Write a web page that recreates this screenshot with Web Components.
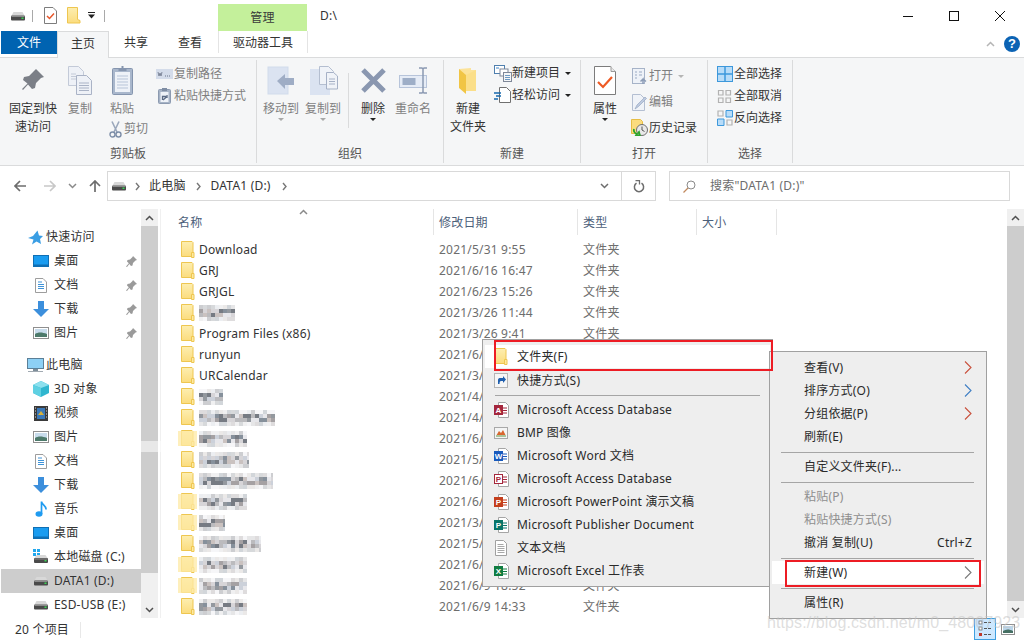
<!DOCTYPE html>
<html lang="zh">
<head>
<meta charset="utf-8">
<title>D:\</title>
<style>
  html, body { margin: 0; height: 100%; background: #fff; overflow: hidden; }
  body { font: 12px/18px "Noto Sans", "Noto Sans CJK SC", sans-serif; letter-spacing: .2px; color: #1a1a1a; }
</style>
</head>
<body>
<win-explorer></win-explorer>

<script>
// all icons live here, drawn on their real pixel size
const folderFill = '<linearGradient id="fg" x1="0" y1="0" x2="0" y2="1"><stop offset="0" stop-color="#fdeeb0"/><stop offset="1" stop-color="#fbdc7e"/></linearGradient>';
const ICONS = {
  drive: [16, 16, '<path d="M1.5 7.5 3.5 4h9l2 3.5z" fill="#d8d8d8"/><rect x="1" y="7.5" width="14" height="5" rx="1" fill="#4a4a4a"/><rect x="1.5" y="8" width="13" height="1" fill="#8a8a8a"/><rect x="11.5" y="9.5" width="2" height="1.5" fill="#39d353"/>'],
  driveWin: [16, 18, '<rect x="0" y="1" width="3" height="3" fill="#21a8ee"/><rect x="4" y="1" width="3" height="3" fill="#21a8ee"/><rect x="0" y="5" width="3" height="3" fill="#21a8ee"/><rect x="4" y="5" width="3" height="3" fill="#21a8ee"/><path d="M1.5 10 3.5 7h9l2 3z" fill="#d8d8d8"/><rect x="1" y="10" width="14" height="5" rx="1" fill="#4a4a4a"/><rect x="1.5" y="10.5" width="13" height="1" fill="#8a8a8a"/><rect x="11.5" y="12" width="2" height="1.5" fill="#39d353"/>'],
  qatProps: [13, 17, '<path d="M.5.5h8.5l3.500 3.500v12.500h-12z" fill="#fff" stroke="#7d7d7d"/><path d="M3 9l2.500 2.500 4.500-5" fill="none" stroke="#e8562a" stroke-width="1.500"/>'],
  qatFolder: [14, 17, folderFill + '<path d="M.5.5h10v12l2.500 1v2.500h-12.500z" fill="url(#fg)" stroke="#eec650"/>'],
  folder: [14, 17, folderFill + '<path d="M.5.5h10.500l1 1v14h-11.500z" fill="url(#fg)" stroke="#eec650"/><path d="M10.500 11.500h2.500v5h-2.500z" fill="#fde9a0" stroke="#eec650"/>'],
  folderSide: [20, 28, '<path d="M1 3l12-1v2h5v21H6z" fill="#fce39a"/><path d="M1 3 8 9v19L1 22z" fill="#f1c545"/><path d="M8 9l10-5v21H8z" fill="#fbdf8a"/>'],
  pin: [24, 24, '<path d="M15 1l8 8-3 1-5 5-1 5-3 1-4-4.500L2 22l-1-1 5.500-5.500L2 12l1-3 5-1 5-5z" fill="#7b7f87"/>'],
  copy: [24, 29, '<path d="M.5.5h10l5 5v14H.5z" fill="#eef1f7" stroke="#c3cad8"/><path d="M8.500 9.500h10l5 5v14h-15z" fill="#eef1f7" stroke="#aab3c6"/><path d="M11 17h10M11 19.500h10M11 22h10M11 24.500h10" stroke="#aab3c6"/><path d="M3 8h5M3 10.500h5M3 13h5" stroke="#c3cad8"/>'],
  paste: [21, 30, '<rect x=".5" y="3.500" width="20" height="26" rx="1" fill="#a9b7cc" stroke="#8595ae"/><rect x="3" y="7" width="15" height="20" fill="#eef2f8"/><path d="M5 11h11M5 14h11M5 17h11M5 20h11M5 23h11" stroke="#b7c4d8"/><path d="M6.500 6V3h3V1h2v2h3v3z" fill="#8595ae"/>'],
  pathCopy: [17, 10, '<rect width="17" height="10" fill="#d4dcea"/><path d="M2 3l1 4 1-3 1 3 1-4" fill="none" stroke="#6b7488" stroke-width=".8"/><path d="M9 7h1m1 0h1m1 0h1" stroke="#6b7488"/>'],
  pasteLink: [13, 16, '<rect x=".5" y="1.500" width="12" height="14" rx="1" fill="#a6b3c6" stroke="#8c9ab0"/><rect x="2.500" y="4" width="8" height="10" fill="#eef2f8"/><rect x="4" y="0" width="5" height="3" fill="#7f8da3"/><path d="M4.500 12V8.500h3.500M5 8.500l.5-.5m-.5 4 4-3.500M9 7v3" stroke="#5b6b85" fill="none" stroke-width="1.300"/>'],
  scissors: [13, 17, '<path d="M3 .5 8 11M10 .5 5 11" stroke="#9aa7bb" stroke-width="1.600"/><circle cx="3.500" cy="13.500" r="2.500" fill="none" stroke="#7d8ea8" stroke-width="1.400"/><circle cx="9.500" cy="13.500" r="2.500" fill="none" stroke="#7d8ea8" stroke-width="1.400"/>'],
  moveTo: [28, 29, '<rect x="1" y="1" width="20" height="27" fill="#dbe3f1" stroke="#d1dbeb"/><path d="M10 15l8-7v4h9v7h-9v4z" fill="#9fadc5"/>'],
  copyTo: [29, 29, '<rect x="1" y="3" width="20" height="26" fill="#dbe3f1"/><path d="M10.500.5h9l5 5v13h-14z" fill="#f0f3f8" stroke="#b4bed0"/><path d="M17.500 6.500h7l4 3.500v13h-11z" fill="#f0f3f8" stroke="#a6b1c6"/><path d="M20 13h6M20 15.500h6M20 18h6" stroke="#a6b1c6"/>'],
  del: [27, 27, '<path d="M3 3l21 21M24 3 3 24" stroke="#8a97b0" stroke-width="5"/>'],
  rename: [29, 27, '<rect x=".5" y="8.500" width="27" height="12" fill="#e6ecf6" stroke="#b7c4da"/><rect x="3.500" y="11" width="13" height="7" fill="#9eaec7"/><path d="M20 1h3l1 1 1-1h3M20 26h3l1-1 1 1h3M24 2v23" fill="none" stroke="#8b99b2" stroke-width="1.500"/>'],
  newItem: [18, 17, '<rect x=".5" y=".5" width="10" height="8" fill="#fff" stroke="#4f7fae"/><rect x="2" y="2" width="3" height="2" fill="#9dc1e4"/><rect x="6" y="4" width="8" height="7" fill="#fff" stroke="#7f8899"/><rect x="9.500" y="7.500" width="8" height="9" fill="#f5f6f7" stroke="#7f8899"/><path d="M11 10.500h5M11 12.500h5M11 14.500h5" stroke="#6f9bc4"/>'],
  easyAccess: [17, 16, '<path d="M5.500.5h7l4 4v11h-11z" fill="#fff" stroke="#707070"/><path d="M0 6h7M2 9h5M0 12h4" stroke="#1668ad" stroke-width="1.400"/>'],
  props: [22, 29, '<path d="M.5.500h16l5 5v23H.5z" fill="#fff" stroke="#7c7c7c"/><path d="M17 .5v5h4.500" fill="#e8e8e8" stroke="#9a9a9a"/><path d="M4 16l5 5 9-10" fill="none" stroke="#ee5a24" stroke-width="2.200"/>'],
  open: [15, 17, '<rect x=".5" y=".5" width="12" height="15" fill="#eef2f8" stroke="#a6b3c8"/><path d="M3 4h2M7 4h3M3 7h2M7 7h3M3 10h2" stroke="#9aa9c2"/><path d="M11 16v-5l-2.500 2.500M11 11l3 2.500" fill="none" stroke="#8c9cb6" stroke-width="1.500"/>'],
  edit: [15, 17, '<path d="M.5.5h8l4 4v12H.5z" fill="#f0f3f8" stroke="#b4bfd2"/><path d="M3 15l2-4 8-8 1.500 1.500-8 8z" fill="#bdcae0" stroke="#98a8c2" stroke-width=".7"/>'],
  history: [17, 17, '<path d="M.5.5h9l2 2v12H.5z" fill="#fbdc7e" stroke="#e6bd45"/><circle cx="11" cy="11" r="5.500" fill="#e8e8e8" stroke="#6f6f6f"/><path d="M11 7.500V11l2.500 1.500" fill="none" stroke="#555"/><path d="M3 10a4 4 0 0 0 3 5l-1 1.500 4 .5-1-4-1 1" fill="none" stroke="#2da52d" stroke-width="1.800"/>'],
  selAll: [16, 16, '<rect x=".5" y=".5" width="15" height="15" fill="#b8dcf8" stroke="#3d98db"/><path d="M8 0v16M0 8h16" stroke="#3d98db" stroke-width="1.500"/>'],
  selNone: [15, 15, '<path d="M1.500 1.500h4.500v4.500h-4.500zM9 1.500h4.500v4.500H9zM1.500 9h4.500v4.500h-4.500zM9 9h4.500v4.500H9z" fill="none" stroke="#b2b2b2" stroke-width="1.200"/>'],
  selInv: [16, 16, '<path d="M1 1h5v5H1zM10 10h5v5h-5z" fill="none" stroke="#b2b2b2" stroke-width="1.200"/><path d="M9 .5h6.500v6.500H9zM.5 9H7v6.500H.5z" fill="#b8dcf8" stroke="#3d98db"/>'],
  back: [12, 12, '<path d="M6 1 1 6l5 5M1 6h11" fill="none" stroke="currentColor" stroke-width="1.700"/>'],
  forward: [12, 12, '<path d="M6 1l5 5-5 5M11 6H0" fill="none" stroke="currentColor" stroke-width="1.700"/>'],
  up: [12, 12, '<path d="M1 6l5-5 5 5M6 1v11" fill="none" stroke="currentColor" stroke-width="1.700"/>'],
  chevDown: [9, 6, '<path d="M1 1l3.500 3.500L8 1" fill="none" stroke="currentColor" stroke-width="1.500"/>'],
  chevUp: [9, 6, '<path d="M1 5l3.500-3.500L8 5" fill="none" stroke="currentColor" stroke-width="1.500"/>'],
  chevRight: [5, 9, '<path d="M1 1l3 3.500L1 8" fill="none" stroke="currentColor" stroke-width="1.400"/>'],
  refresh: [12, 13, '<path d="M3.500 3.200a4.600 4.600 0 1 0 5 0" fill="none" stroke="#6d6d6d" stroke-width="1.500"/><path d="M2.500 .5h4v4" fill="none" stroke="#6d6d6d" stroke-width="1.300"/>'],
  search: [13, 13, '<circle cx="8" cy="5" r="4" fill="none" stroke="#8a8a8a"/><path d="M5 8 .5 12.500" stroke="#c28a5e" stroke-width="1.200"/>'],
  star: [15, 15, '<path d="M9.500.5 11 5.500l4 .5-3 3 1 5-4.500-2.500L4 14.500 5.500 9.500 0 8l5-2z" fill="#3a9ee4"/>'],
  desktop: [16, 12, '<rect x=".5" y=".5" width="15" height="11" fill="#1a9cf0" stroke="#0f6fb4"/><rect x="1" y="9.500" width="14" height="1.500" fill="#0f6fb4"/>'],
  doc: [12, 15, '<path d="M.5.500h7.500l3.500 3.500v10.500H.5z" fill="#fff" stroke="#9d9d9d"/><path d="M3 4h4M3 6.500h6M3 8.500h6M3 10.500h6" stroke="#3f93d8"/>'],
  down: [16, 16, '<path d="M5 0h6v8h5l-8 8-8-8h5z" fill="#3c8fdc"/>'],
  picture: [16, 12, '<rect x=".5" y=".5" width="15" height="11" fill="#fff" stroke="#8f8f8f"/><rect x="2" y="2" width="12" height="8" fill="#c8dcec"/><path d="M2 7c3-2 7-2 12 0v3H2z" fill="#4d7a6b"/>'],
  pc: [17, 14, '<rect x=".5" y=".5" width="16" height="10" fill="#8dd0f5" stroke="#5b7f97"/><rect x="6" y="11" width="5" height="2" fill="#7e8e9a"/><rect x="1" y="13" width="15" height="1" fill="#a1aab2"/>'],
  cube: [16, 16, '<path d="M8 0l8 4v8l-8 4-8-4V4z" fill="#2fb6cf"/><path d="M8 7 0 4l8-4 8 4z" fill="#8de0ee"/><path d="M8 7v9L0 12V4z" fill="#5fd0e2"/>'],
  video: [14, 15, '<rect width="14" height="15" fill="#3a3a3a"/><rect x="3" y="2" width="8" height="11" fill="#3a78b8"/><path d="M4 9l3-4 3 4z" fill="#d8b13a"/><path d="M1 2h1M1 5h1M1 8h1M1 11h1M12 2h1M12 5h1M12 8h1M12 11h1" stroke="#ddd"/>'],
  music: [12, 16, '<ellipse cx="4" cy="13" rx="3.500" ry="2.800" fill="#1f9bf0"/><path d="M6.500 13V.5c0 3 5 4 4.500 8" fill="none" stroke="#1f9bf0" stroke-width="1.700"/>'],
  pinSmall: [11, 11, '<path d="M7 0l4 4-1.500.5-2.500 2.500-.5 2.500-1.500.5-1.700-2L1 11l-1-.5 2.800-3.300L1 5.500l.5-1.500 2.500-.5 2.500-2.500z" fill="#9a9a9a"/>'],
  shortcut: [14, 15, '<rect x=".5" y=".5" width="13" height="14" fill="#f6f6f6" stroke="#b5b5b5"/><path d="M4 11V7c0-1.500 1-2 2.500-2H9V3l3 3.500L9 10V8H7c-1 0-1.500 1-1.500 3z" fill="#1f5fae"/>'],
  bmp: [14, 12, '<rect x=".5" y=".5" width="13" height="11" fill="#f4f4f4" stroke="#a8a8a8"/><path d="M2 9l3-5 2 2 2-3 3 6z" fill="#d8662e"/><rect x="2" y="8" width="10" height="2" fill="#a9c49a"/>'],
  text: [12, 16, '<path d="M.5.500h8l3 3v12h-11z" fill="#fff" stroke="#a0a0a0"/><path d="M2.500 4.500h6M2.500 6.500h7M2.500 8.500h7M2.500 10.500h7M2.500 12.500h7" stroke="#a8a8a8"/>'],
  bigList: [22, 22, '<rect x=".5" y=".5" width="21" height="21" fill="#cce8ff" stroke="#3e9fe0"/><rect x="5" y="3" width="3" height="3" fill="#fff" stroke="#6a6a6a" stroke-width=".8"/><rect x="5" y="9" width="3" height="3" fill="#fff" stroke="#6a6a6a" stroke-width=".8"/><rect x="5" y="15" width="3" height="3" fill="#c0392b"/><path d="M10 4.500h3m1 0h3M10 10.500h3m1 0h3M10 16.500h3m1 0h3" stroke="#555"/>'],
  bigThumb: [14, 11, '<rect x=".5" y=".5" width="13" height="10" fill="#fff" stroke="#8f8f8f"/><rect x="2" y="2" width="10" height="7" fill="#bcd6ea"/><path d="M2 7c3-2 6-2 10 0v2H2z" fill="#456f63"/>']
};

// office file icon: letter tile on a small page
function officeIcon(letter, color, hollow) {
  const tile = hollow
    ? `<rect x=".5" y="3.500" width="8" height="9" fill="#fff" stroke="${color}"/>`
    : `<rect x="0" y="3" width="9" height="10" fill="${color}"/>`;
  return [15, 16, `<path d="M4.500 .5h7l3 3v12h-10z" fill="#fff" stroke="#a5a5a5"/><path d="M9 6h4M9 8.500h4M9 11h4" stroke="${color}"/>${tile}<text x="4.500" y="11" font-size="8" font-weight="700" text-anchor="middle" fill="${hollow ? color : '#fff'}" font-family="Liberation Sans, sans-serif" letter-spacing="0">${letter}</text>`];
}
ICONS.access = officeIcon('A', '#a4263c');
ICONS.word = officeIcon('W', '#185abd');
ICONS.accessP = officeIcon('P', '#a4263c', true);
ICONS.ppt = officeIcon('P', '#c43e1c');
ICONS.pub = officeIcon('P', '#077568');
ICONS.excel = officeIcon('X', '#107c41');

let iconId = 0;
function svg(name) {
  const [w, h, body] = ICONS[name];
  // every gradient needs an id of its own inside its shadow root
  const id = 'g' + (++iconId);
  const inner = body.replace(/id="fg"/g, `id="${id}"`).replace(/url\(#fg\)/g, `url(#${id})`);
  return `<svg width="${w}" height="${h}" viewBox="0 0 ${w} ${h}" style="display:block">${inner}</svg>`;
}

// pixelated patch standing for the censored names in the reference
function mosaic(width, seed) {
  const cols = ['#8d9299', '#b7b7bb', '#d5d3d6', '#6f747c', '#c9cfd8', '#a09c9e', '#e6e6ea', '#7f8a96', '#c7bfbd'];
  let s = seed * 7919 + 13, out = '';
  for (let y = 0; y < 16; y += 4) {
    for (let x = 0; x < width; x += 4) {
      s = (s * 1103515245 + 12345) & 0x7fffffff;
      const c = cols[(s >> 8) % cols.length];
      const a = (y === 0 || y === 12) ? 0.35 : 0.95;
      out += `<rect x="${x}" y="${y}" width="4" height="4" fill="${c}" opacity="${a}"/>`;
    }
  }
  return `<svg width="${width}" height="16" shape-rendering="crispEdges" style="display:block">${out}</svg>`;
}

class WinIcon extends HTMLElement {
  connectedCallback() {
    const shadow = this.attachShadow({ mode: 'open' });
    shadow.innerHTML = `<style>:host{display:block;line-height:0}</style>${svg(this.getAttribute('name'))}`;
  }
}
customElements.define('win-icon', WinIcon);

class WinTitlebar extends HTMLElement {
  connectedCallback() {
    const shadow = this.attachShadow({ mode: 'open' });
    shadow.innerHTML = `
      <style>
        :host { display: flex; height: 31px; align-items: center; position: relative; }
        .qat { display: flex; align-items: center; padding-left: 10px; width: 218px; box-sizing: border-box; height: 31px; }
        .bar { width: 1px; height: 12px; background: #a9a9a9; }
        .manage { width: 89px; height: 27px; margin-top: 4px; background: #c4f09b; color: #3a3a3a; text-align: center; line-height: 27px; }
        .path { margin-left: 13px; color: #333; }
        .win { margin-left: auto; margin-right: 1px; display: flex; height: 31px; }
        .win div { width: 46px; display: flex; align-items: center; justify-content: center; }
      </style>
      <div class="qat">
        ${svg('drive')}
        <div class="bar" style="margin-left:6px"></div>
        <div style="margin-left:11px">${svg('qatProps')}</div>
        <div style="margin-left:10px">${svg('qatFolder')}</div>
        <svg width="8" height="7" style="margin-left:7px;display:block"><path d="M0 0h7v1H0zM0 2.500h7L3.500 6.500z" fill="#222"/></svg>
        <div class="bar" style="margin-left:8px"></div>
      </div>
      <div class="manage">管理</div>
      <div class="path">D:\\</div>
      <div class="win">
        <div><svg width="10" height="10"><path d="M0 5.500h10" stroke="#111"/></svg></div>
        <div><svg width="10" height="10"><rect x=".5" y=".5" width="9" height="9" fill="none" stroke="#111"/></svg></div>
        <div><svg width="10" height="10"><path d="M0 0l10 10M10 0 0 10" stroke="#111"/></svg></div>
      </div>`;
  }
}
customElements.define('win-titlebar', WinTitlebar);

class WinTabs extends HTMLElement {
  connectedCallback() {
    const shadow = this.attachShadow({ mode: 'open' });
    shadow.innerHTML = `
      <style>
        :host { display: flex; height: 26px; box-sizing: border-box; color: #333; position: relative; z-index: 1; letter-spacing: 0; }
        .t { text-align: center; line-height: 24px; }
        .file { width: 56px; margin-left: 1px; height: 23px; background: #0063b1; color: #fff; line-height: 23px; }
        .home { width: 52px; height: 27px; box-sizing: border-box; background: #f5f6f7; border: 1px solid #dadbdc; border-bottom: 0; }
        .tool { width: 90px; margin-left: 1px; height: 22px; box-sizing: border-box; border: 1px solid #e4e4e4; border-top: 0; border-bottom: 0; line-height: 24px; }
        .end { margin-left: auto; display: flex; align-items: center; height: 26px; padding-right: 4px; }
        .help { width: 16px; height: 16px; margin-left: 9px; border-radius: 50%; background: #0c63b4; color: #fff; font: 700 13px/16px "Liberation Sans", sans-serif; text-align: center; }
      </style>
      <div class="t file">文件</div>
      <div class="t home">主页</div>
      <div class="t" style="width:54px">共享</div>
      <div class="t" style="width:54px">查看</div>
      <div class="t tool">驱动器工具</div>
      <div class="end">
        <span style="color:#b5b5b5">${svg('chevUp')}</span>
        <div class="help">?</div>
      </div>`;
  }
}
customElements.define('win-tabs', WinTabs);

class RibbonGroup extends HTMLElement {
  connectedCallback() {
    const shadow = this.attachShadow({ mode: 'open' });
    shadow.innerHTML = `
      <style>
        :host { display: grid; grid-template-rows: 85px 18px; box-sizing: border-box; height: 103px; border-right: 1px solid #dadbdc; }
        .body { display: flex; }
        .label { text-align: center; color: #555; }
      </style>
      <div class="body"><slot></slot></div>
      <div class="label">${this.getAttribute('label')}</div>`;
  }
}
customElements.define('ribbon-group', RibbonGroup);

class BigButton extends HTMLElement {
  connectedCallback() {
    const shadow = this.attachShadow({ mode: 'open' });
    const color = this.hasAttribute('dim') ? '#7f7f7f' : '#333';
    const caret = this.getAttribute('caret');
    shadow.innerHTML = `
      <style>
        :host { display: flex; flex-direction: column; align-items: center; width: ${this.getAttribute('w') || 36}px; }
        .ic { height: 40px; display: flex; align-items: center; justify-content: center; }
        .txt { color: ${color}; text-align: center; white-space: pre-line; }
        .caret { width: 0; height: 0; border: 3px solid transparent; border-top: 3px solid ${caret === 'dim' ? '#a8a8a8' : '#222'}; border-bottom: 0; }
      </style>
      <div class="ic"><slot></slot></div>
      <div class="txt">${this.getAttribute('label')}</div>
      ${caret ? '<div class="caret"></div>' : ''}`;
  }
}
customElements.define('big-button', BigButton);

class SmallButton extends HTMLElement {
  connectedCallback() {
    const shadow = this.attachShadow({ mode: 'open' });
    const color = this.hasAttribute('dim') ? '#7f7f7f' : '#333';
    const caret = this.getAttribute('caret');
    shadow.innerHTML = `
      <style>
        :host { display: flex; align-items: center; height: ${this.getAttribute('h') || 22}px; white-space: nowrap; }
        .ic { width: ${this.getAttribute('iw') || 19}px; display: flex; justify-content: center; flex: none; }
        .txt { color: ${color}; }
        .caret { margin-left: 5px; width: 0; height: 0; border: 3px solid transparent; border-top: 3px solid ${caret === 'dim' ? '#b5b5b5' : '#222'}; border-bottom: 0; }
      </style>
      <div class="ic"><slot></slot></div>
      <div class="txt">${this.getAttribute('label')}</div>
      ${caret ? '<div class="caret"></div>' : ''}`;
  }
}
customElements.define('small-button', SmallButton);

class WinRibbon extends HTMLElement {
  connectedCallback() {
    const shadow = this.attachShadow({ mode: 'open' });
    shadow.innerHTML = `
      <style>
        :host { display: flex; height: 109px; box-sizing: border-box; background: #f5f6f7; border-top: 1px solid #dadbdc; border-bottom: 1px solid #dadbdc; padding-top: 2px; letter-spacing: 0; overflow: hidden; }
        .col { display: flex; flex-direction: column; padding-top: 3px; }
        .paste { width: 36px; margin-left: 6px; }
        .sep { width: 1px; height: 55px; background: #dadbdc; margin-top: 13px; }
      </style>
      <ribbon-group label="剪贴板" style="width:257px">
        <big-button label="固定到快速访问" w="50" style="margin-left:8px"><win-icon name="pin"></win-icon></big-button>
        <big-button label="复制" dim style="margin-left:4px"><win-icon name="copy"></win-icon></big-button>
        <div class="paste">
          <big-button label="粘贴" dim><win-icon name="paste"></win-icon></big-button>
          <small-button label="剪切" dim iw="17" style="margin-left:3px"><win-icon name="scissors"></win-icon></small-button>
        </div>
        <div class="col" style="margin-left:15px">
          <small-button label="复制路径" dim><win-icon name="pathCopy"></win-icon></small-button>
          <small-button label="粘贴快捷方式" dim><win-icon name="pasteLink"></win-icon></small-button>
        </div>
      </ribbon-group>
      <ribbon-group label="组织" style="width:187px">
        <big-button label="移动到" dim caret="dim" style="margin-left:6px"><win-icon name="moveTo"></win-icon></big-button>
        <big-button label="复制到" dim caret="dim" style="margin-left:6px"><win-icon name="copyTo"></win-icon></big-button>
        <div class="sep" style="margin-left:7px"></div>
        <big-button label="删除" caret="on" w="40" style="margin-left:4px"><win-icon name="del"></win-icon></big-button>
        <big-button label="重命名" dim w="40"><win-icon name="rename"></win-icon></big-button>
      </ribbon-group>
      <ribbon-group label="新建" style="width:137px">
        <big-button label="新建&#10;文件夹" style="margin-left:6px"><win-icon name="folderSide"></win-icon></big-button>
        <div class="col" style="margin-left:7px;padding-top:2px">
          <small-button label="新建项目" caret="on"><win-icon name="newItem"></win-icon></small-button>
          <small-button label="轻松访问" caret="on"><win-icon name="easyAccess"></win-icon></small-button>
        </div>
      </ribbon-group>
      <ribbon-group label="打开" style="width:127px">
        <big-button label="属性" caret="on" style="margin-left:6px"><win-icon name="props"></win-icon></big-button>
        <div class="col" style="margin-left:7px">
          <small-button label="打开" dim caret="dim" h="26"><win-icon name="open"></win-icon></small-button>
          <small-button label="编辑" dim h="26"><win-icon name="edit"></win-icon></small-button>
          <small-button label="历史记录" h="25"><win-icon name="history"></win-icon></small-button>
        </div>
      </ribbon-group>
      <ribbon-group label="选择" style="width:85px">
        <div class="col" style="margin-left:7px">
          <small-button label="全部选择"><win-icon name="selAll"></win-icon></small-button>
          <small-button label="全部取消"><win-icon name="selNone"></win-icon></small-button>
          <small-button label="反向选择"><win-icon name="selInv"></win-icon></small-button>
        </div>
      </ribbon-group>`;
  }
}
customElements.define('win-ribbon', WinRibbon);

class WinAddressbar extends HTMLElement {
  connectedCallback() {
    const shadow = this.attachShadow({ mode: 'open' });
    shadow.innerHTML = `
      <style>
        :host { display: flex; align-items: center; height: 30px; margin: 5px 14px 8px 14px; }
        .nav { display: flex; align-items: center; width: 93px; flex: none; color: #6d6d6d; }
        .box { flex: none; width: 549px; height: 30px; box-sizing: border-box; border: 1px solid #d9d9d9; display: flex; align-items: center; color: #333; }
        .crumb { display: flex; align-items: center; color: #777; }
        .end { margin-left: auto; display: flex; align-items: center; height: 28px; color: #6d6d6d; }
        .end > div { height: 28px; display: flex; align-items: center; justify-content: center; }
        .search { margin-left: 13px; flex: 1; height: 30px; box-sizing: border-box; border: 1px solid #d9d9d9; display: flex; align-items: center; color: #6d6d6d; padding-left: 13px; }
      </style>
      <div class="nav">
        ${svg('back')}
        <span style="margin-left:18px;color:#c8c8c8">${svg('forward')}</span>
        <span style="margin-left:12px;color:#8a8a8a">${svg('chevDown')}</span>
        <span style="margin-left:12px">${svg('up')}</span>
      </div>
      <div class="box">
        <span style="margin-left:3px">${svg('drive')}</span>
        <span class="crumb" style="margin-left:8px">${svg('chevRight')}</span>
        <span style="margin-left:9px">此电脑</span>
        <span class="crumb" style="margin-left:10px">${svg('chevRight')}</span>
        <span style="margin-left:10px">DATA1 (D:)</span>
        <span class="crumb" style="margin-left:11px">${svg('chevRight')}</span>
        <div class="end">
          <div style="width:33px;border-right:1px solid #d9d9d9">${svg('chevDown')}</div>
          <div style="width:33px">${svg('refresh')}</div>
        </div>
      </div>
      <div class="search">${svg('search')}<span style="margin-left:14px">搜索"DATA1 (D:)"</span></div>`;
  }
}
customElements.define('win-addressbar', WinAddressbar);

class NavItem extends HTMLElement {
  connectedCallback() {
    const shadow = this.attachShadow({ mode: 'open' });
    const head = this.hasAttribute('head');
    const pinned = this.hasAttribute('pinned');
    shadow.innerHTML = `
      <style>
        :host { display: flex; align-items: center; height: 24px; position: relative; color: #333; }
        :host([selected]) { background: #cdcdcd; }
        .ic { flex: none; width: ${head ? 18 : 26}px; margin-left: ${head ? 25 : 27}px; display: flex; justify-content: center; }
        .pin { margin-left: auto; margin-right: 4px; }
      </style>
      <div class="ic">${svg(this.getAttribute('icon'))}</div>
      <div style="margin-left:${head ? 2 : 0}px">${this.getAttribute('label')}</div>
      ${pinned ? `<div class="pin">${svg('pinSmall')}</div>` : ''}`;
  }
}
customElements.define('nav-item', NavItem);

class WinScrollbar extends HTMLElement {
  connectedCallback() {
    const shadow = this.attachShadow({ mode: 'open' });
    shadow.innerHTML = `
      <style>
        :host { display: flex; flex-direction: column; width: 17px; flex: none; background: #f0f0f0; color: #505050; }
        .btn { height: 17px; display: flex; align-items: center; justify-content: center; flex: none; }
        .thumb { flex: none; height: ${this.getAttribute('thumb')}px; background: #cdcdcd; }
        .fill { flex: 1; }
      </style>
      <div class="btn">${svg('chevUp')}</div>
      <div class="thumb"></div>
      <div class="fill"></div>
      <div class="btn">${svg('chevDown')}</div>`;
  }
}
customElements.define('win-scrollbar', WinScrollbar);

class WinSidebar extends HTMLElement {
  connectedCallback() {
    const shadow = this.attachShadow({ mode: 'open' });
    shadow.innerHTML = `
      <style>
        :host { display: flex; width: 158px; flex: none; height: 409px; }
        .list { width: 140px; margin-left: 1px; flex: none; padding-top: 16px; box-sizing: border-box; overflow: hidden; }
        .gap { height: 8px; }
      </style>
      <div class="list">
        <nav-item head icon="star" label="快速访问"></nav-item>
        <nav-item icon="desktop" label="桌面" pinned></nav-item>
        <nav-item icon="doc" label="文档" pinned></nav-item>
        <nav-item icon="down" label="下载" pinned></nav-item>
        <nav-item icon="picture" label="图片" pinned></nav-item>
        <div class="gap"></div>
        <nav-item head icon="pc" label="此电脑"></nav-item>
        <nav-item icon="cube" label="3D 对象"></nav-item>
        <nav-item icon="video" label="视频"></nav-item>
        <nav-item icon="picture" label="图片"></nav-item>
        <nav-item icon="doc" label="文档"></nav-item>
        <nav-item icon="down" label="下载"></nav-item>
        <nav-item icon="music" label="音乐"></nav-item>
        <nav-item icon="desktop" label="桌面"></nav-item>
        <nav-item icon="driveWin" label="本地磁盘 (C:)"></nav-item>
        <nav-item icon="drive" label="DATA1 (D:)" selected></nav-item>
        <nav-item icon="drive" label="ESD-USB (E:)"></nav-item>
      </div>
      <win-scrollbar thumb="347"></win-scrollbar>`;
  }
}
customElements.define('win-sidebar', WinSidebar);

class FileRow extends HTMLElement {
  connectedCallback() {
    const shadow = this.attachShadow({ mode: 'open' });
    const name = this.getAttribute('name');
    const blur = this.getAttribute('blur');
    const seed = +this.getAttribute('seed') || 1;
    const hazy = this.hasAttribute('hazy');
    const covered = this.hasAttribute('covered');
    shadow.innerHTML = `
      <style>
        :host { display: grid; grid-template-columns: 261px 144px 1fr; height: 21px; align-items: center; color: #6d6d6d; }
        .n { display: flex; align-items: center; padding-left: 3px; color: #333; }
        .f { position: relative; }
        .haze { position: absolute; left: -3px; top: 1px; width: 19px; height: 15px; background: #fde9a6; opacity: .75; }
      </style>
      <div class="n">
        <div class="f">${svg('folder')}${hazy ? '<div class="haze"></div>' : ''}</div>
        <div style="margin-left:4px">${name || mosaic(+blur, seed)}</div>
      </div>
      <div>${this.getAttribute('date')}</div>
      ${covered ? '' : '<div>文件夹</div>'}`;
  }
}
customElements.define('file-row', FileRow);

class WinFilelist extends HTMLElement {
  connectedCallback() {
    const shadow = this.attachShadow({ mode: 'open' });
    // the rows under the context menus only show the start of their date
    const rows = [
      ['Download', 0, '2021/5/31 9:55'],
      ['GRJ', 0, '2021/6/16 16:47'],
      ['GRJGL', 0, '2021/6/23 15:26'],
      ['', 36, '2021/3/26 11:44'],
      ['Program Files (x86)', 0, '2021/3/26 9:41'],
      ['runyun', 0, '2021/6/', 0, 1],
      ['URCalendar', 0, '2021/3/', 0, 1],
      ['', 24, '2021/4/', 0, 1],
      ['', 76, '2021/4/', 0, 1],
      ['', 48, '2021/6/', 1, 1],
      ['', 50, '2021/5/', 0, 1],
      ['', 74, '2021/6/', 0, 1],
      ['', 48, '2021/6/', 1, 1],
      ['', 26, '2021/3/', 1, 1],
      ['', 62, '2021/5/', 0, 1],
      ['', 48, '2021/6/', 1, 1],
      ['', 48, '2021/6/9 18:52', 1],
      ['', 48, '2021/6/9 14:33']
    ];
    const rowHtml = rows.map((r, i) =>
      `<file-row ${r[0] ? `name="${r[0]}"` : `blur="${r[1]}" seed="${i + 1}"`} date="${r[2]}" ${r[3] ? 'hazy' : ''} ${r[4] ? 'covered' : ''}></file-row>`
    ).join('');
    shadow.innerHTML = `
      <style>
        :host { display: flex; flex: 1; height: 409px; min-width: 0; position: relative; }
        .main { flex: 1; min-width: 0; border-left: 1px solid #f0f0f0; box-sizing: border-box; margin-left: 2px; padding-left: 17px; }
        .head { display: flex; height: 26px; color: #4c607a; position: relative; }
        .head div { box-sizing: border-box; padding-left: 5px; height: 26px; line-height: 27px; border-right: 1px solid #e5e5e5; }
        .sort { position: absolute; left: 121px; top: 0; color: #8a8a8a; line-height: 0; }
        .rows { padding-top: 4px; }
      </style>
      <div class="main">
        <div class="head">
          <div style="width:256px;padding-left:0">名称</div>
          <div style="width:144px">修改日期</div>
          <div style="width:119px">类型</div>
          <div style="width:80px">大小</div>
          <span class="sort">${svg('chevUp')}</span>
        </div>
        <div class="rows">${rowHtml}</div>
      </div>
      <win-scrollbar thumb="375"></win-scrollbar>`;
  }
}
customElements.define('win-filelist', WinFilelist);

class MenuItem extends HTMLElement {
  connectedCallback() {
    const shadow = this.attachShadow({ mode: 'open' });
    const icon = this.getAttribute('icon');
    const h = this.getAttribute('h') || 23;
    shadow.innerHTML = `
      <style>
        :host { display: flex; align-items: center; height: ${h}px; color: #2a2a2a; position: relative; }
        :host([off]) { color: #8f8f8f; }
        :host([hot]) { background: #fff; }
        .ic { width: ${this.getAttribute('iw') || 32}px; flex: none; display: flex; justify-content: center; }
        .r { margin-left: auto; margin-right: ${this.getAttribute('mr') || 12}px; display: flex; }
      </style>
      <div class="ic">${icon ? svg(icon) : ''}</div>
      <div>${this.getAttribute('label')}</div>
      ${this.hasAttribute('sub') ? `<div class="r"><svg width="8" height="13"><path d="M1 .5 7 6.500 1 12.500" fill="none" stroke="${this.getAttribute('sub')}" stroke-width="1.100"/></svg></div>` : ''}
      ${this.hasAttribute('key') ? `<div class="r">${this.getAttribute('key')}</div>` : ''}`;
  }
}
customElements.define('menu-item', MenuItem);

class MenuSep extends HTMLElement {
  connectedCallback() {
    const shadow = this.attachShadow({ mode: 'open' });
    shadow.innerHTML = `<style>:host{display:block;height:${this.getAttribute('h') || 9}px;position:relative}
      div{position:absolute;top:50%;left:${this.getAttribute('l')}px;right:${this.getAttribute('r')}px;height:1px;background:#a5a5a5}</style><div></div>`;
  }
}
customElements.define('menu-sep', MenuSep);

class PopMenu extends HTMLElement {
  connectedCallback() {
    const shadow = this.attachShadow({ mode: 'open' });
    shadow.innerHTML = `
      <style>
        :host { display: block; position: absolute; box-sizing: border-box; background: #eeeeee; border: 1px solid #a0a0a0; }
      </style>
      <slot></slot>`;
  }
}
customElements.define('pop-menu', PopMenu);

class WinStatusbar extends HTMLElement {
  connectedCallback() {
    const shadow = this.attachShadow({ mode: 'open' });
    shadow.innerHTML = `
      <style>
        :host { display: flex; align-items: center; height: 24px; color: #333; padding-left: 15px; }
        .bar { width: 1px; height: 16px; background: #e8e8e8; margin-left: 11px; }
        .views { margin-left: auto; display: flex; align-items: center; margin-right: 9px; margin-top: -2px; }
      </style>
      <div>20 个项目</div>
      <div class="bar"></div>
      <div class="views">${svg('bigList')}<span style="margin-left:5px">${svg('bigThumb')}</span></div>`;
  }
}
customElements.define('win-statusbar', WinStatusbar);

class WinExplorer extends HTMLElement {
  connectedCallback() {
    const shadow = this.attachShadow({ mode: 'open' });
    shadow.innerHTML = `
      <style>
        :host { display: block; position: relative; width: 1024px; height: 642px; overflow: hidden; background: #fff; }
        .content { display: flex; }
        .red { position: absolute; box-sizing: border-box; border: 2px solid #ed1c24; pointer-events: none; }
        .mark { position: absolute; left: 767px; top: 611px; font: 16px/24px "Liberation Sans", sans-serif; letter-spacing: .1px; color: rgba(195,195,195,.55); white-space: nowrap; }
        .smear { position: absolute; left: 140px; top: 441px; width: 23px; height: 11px; background: rgba(255,255,255,.55); }
      </style>
      <win-titlebar></win-titlebar>
      <win-tabs></win-tabs>
      <win-ribbon></win-ribbon>
      <win-addressbar></win-addressbar>
      <div class="content">
        <win-sidebar></win-sidebar>
        <win-filelist></win-filelist>
      </div>
      <win-statusbar></win-statusbar>
      <div class="smear"></div>

      <pop-menu style="left:482px;top:339px;width:291px;height:248px;padding:5px 2px">
        <menu-item icon="folder" label="文件夹(F)" hot></menu-item>
        <menu-item icon="shortcut" label="快捷方式(S)" style="margin-top:1px"></menu-item>
        <menu-sep l="10" r="10" h="6"></menu-sep>
        <menu-item icon="access" label="Microsoft Access Database"></menu-item>
        <menu-item icon="bmp" label="BMP 图像"></menu-item>
        <menu-item icon="word" label="Microsoft Word 文档"></menu-item>
        <menu-item icon="accessP" label="Microsoft Access Database"></menu-item>
        <menu-item icon="ppt" label="Microsoft PowerPoint 演示文稿"></menu-item>
        <menu-item icon="pub" label="Microsoft Publisher Document"></menu-item>
        <menu-item icon="text" label="文本文档"></menu-item>
        <menu-item icon="excel" label="Microsoft Excel 工作表"></menu-item>
      </pop-menu>

      <pop-menu style="left:769px;top:351px;width:218px;height:268px;padding:4px 2px">
        <menu-item label="查看(V)" sub="#c9503c"></menu-item>
        <menu-item label="排序方式(O)" sub="#3f7fc4"></menu-item>
        <menu-item label="分组依据(P)" sub="#c9503c"></menu-item>
        <menu-item label="刷新(E)"></menu-item>
        <menu-sep l="9" r="10" h="7"></menu-sep>
        <menu-item label="自定义文件夹(F)..."></menu-item>
        <menu-sep l="9" r="10" h="7"></menu-sep>
        <menu-item label="粘贴(P)" off></menu-item>
        <menu-item label="粘贴快捷方式(S)" off></menu-item>
        <menu-item label="撤消 复制(U)" key="Ctrl+Z"></menu-item>
        <menu-sep l="9" r="10" h="7"></menu-sep>
        <menu-item label="新建(W)" sub="#7a7a7a" hot></menu-item>
        <menu-sep l="9" r="10" h="7"></menu-sep>
        <menu-item label="属性(R)"></menu-item>
      </pop-menu>

      <div class="red" style="left:494px;top:340px;width:279px;height:31px"></div>
      <div class="red" style="left:785px;top:560px;width:196px;height:27px"></div>
      <div class="mark">https://blog.csdn.net/m0_48007923</div>`;
  }
}
customElements.define('win-explorer', WinExplorer);
</script>
</body>
</html>
